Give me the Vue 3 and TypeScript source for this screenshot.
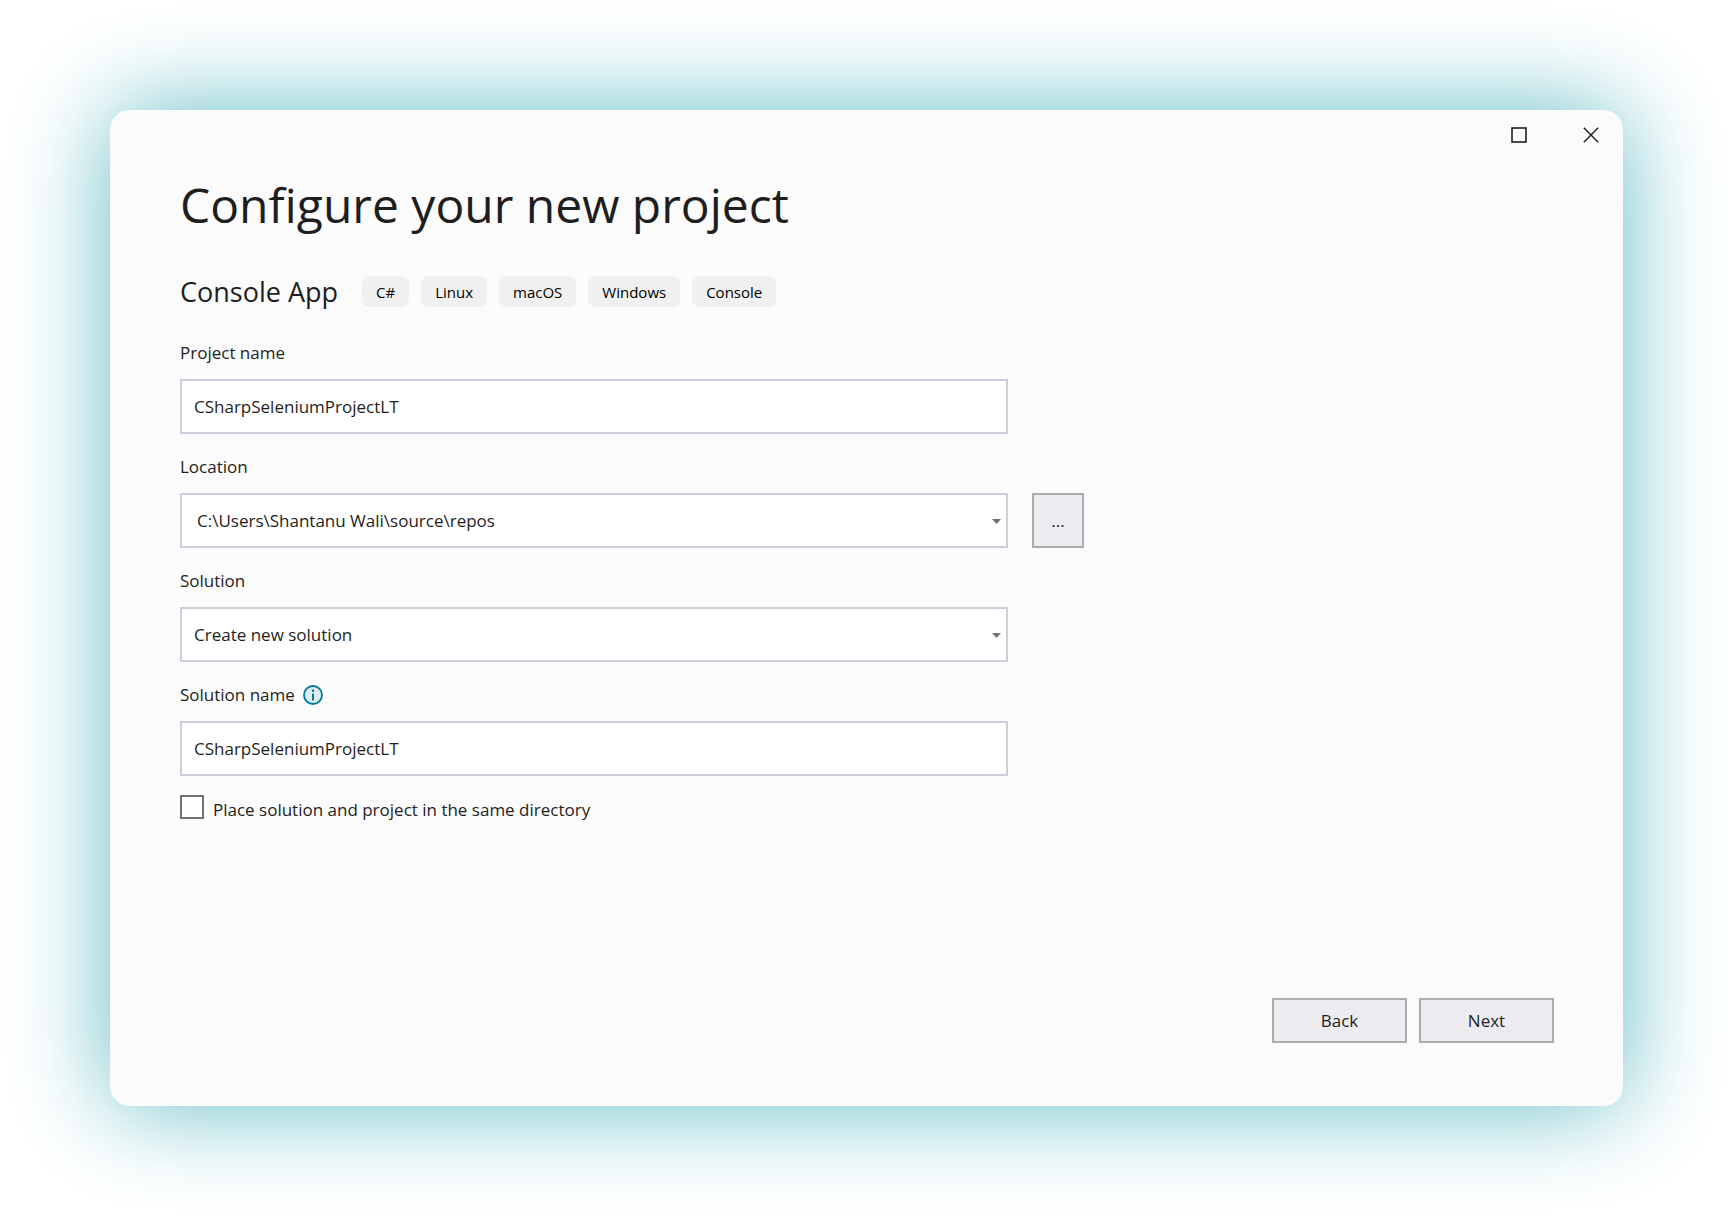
<script setup lang="ts">
import { ref } from 'vue'

const tags: string[] = ['C#', 'Linux', 'macOS', 'Windows', 'Console']
const projectName = ref<string>('CSharpSeleniumProjectLT')
const location = ref<string>('C:\\Users\\Shantanu Wali\\source\\repos')
const solution = ref<string>('Create new solution')
const solutionName = ref<string>('CSharpSeleniumProjectLT')
const sameDirectory = ref<boolean>(false)
</script>

<template>
  <div class="page">
    <main class="dialog">
      <header class="titlebar">
        <button type="button" class="window-button" aria-label="Maximize">
          <svg width="16" height="16" viewBox="0 0 16 16" fill="none" stroke="#1e1e1e" stroke-width="1.6">
            <rect x="1" y="1" width="14" height="14" />
          </svg>
        </button>
        <button type="button" class="window-button" aria-label="Close">
          <svg width="16" height="16" viewBox="0 0 16 16" fill="none" stroke="#1e1e1e" stroke-width="1.4">
            <path d="M0.8 0.8 15.2 15.2M15.2 0.8 0.8 15.2" />
          </svg>
        </button>
      </header>

      <h1 class="title">Configure your new project</h1>

      <section class="template">
        <h2 class="template-name">Console App</h2>
        <ul class="tags">
          <li v-for="tag in tags" :key="tag" class="tag">{{ tag }}</li>
        </ul>
      </section>

      <form id="project-form" class="form" @submit.prevent>
        <div class="field">
          <label class="label" for="project-name">Project name</label>
          <input id="project-name" v-model="projectName" class="control" type="text" spellcheck="false" />
        </div>

        <div class="field">
          <label class="label" for="location">Location</label>
          <div class="row">
            <div class="select-wrap">
              <select id="location" v-model="location" class="control path">
                <option>{{ location }}</option>
              </select>
              <svg class="arrow" width="9" height="5" viewBox="0 0 9 5" fill="#717171">
                <path d="M0 0H9L4.5 5Z" />
              </svg>
            </div>
            <button type="button" class="button browse" aria-label="Browse">...</button>
          </div>
        </div>

        <div class="field">
          <label class="label" for="solution">Solution</label>
          <div class="select-wrap">
            <select id="solution" v-model="solution" class="control">
              <option>Create new solution</option>
            </select>
            <svg class="arrow" width="9" height="5" viewBox="0 0 9 5" fill="#717171">
              <path d="M0 0H9L4.5 5Z" />
            </svg>
          </div>
        </div>

        <div class="field">
          <label class="label" for="solution-name">
            Solution name
            <svg width="20" height="20" viewBox="0 0 20 20">
              <circle cx="10" cy="10" r="9" fill="#e0ecf1" stroke="#0077a0" stroke-width="1.8" />
              <circle cx="10" cy="5.7" r="1.3" fill="#0077a0" />
              <path d="M10 8.4V15.4" stroke="#0077a0" stroke-width="1.9" />
            </svg>
          </label>
          <input id="solution-name" v-model="solutionName" class="control" type="text" spellcheck="false" />
        </div>

        <div class="check">
          <input id="same-directory" v-model="sameDirectory" class="checkbox" type="checkbox" />
          <label class="check-label" for="same-directory">Place solution and project in the same directory</label>
        </div>
      </form>

      <footer class="actions">
        <button type="button" class="button action">Back</button>
        <button type="submit" form="project-form" class="button action">Next</button>
      </footer>
    </main>
  </div>
</template>

<style>
body {
  margin: 0;
  background: #ffffff;
}
</style>

<style scoped>
.page {
  box-sizing: border-box;
  min-height: 100vh;
  padding: 110px;
  display: flex;
  font-family: "Segoe UI", "Open Sans", "Noto Sans", sans-serif;
  font-size: 17px;
  line-height: 24px;
  color: #1e1e1e;
}

.dialog {
  box-sizing: border-box;
  flex: 1;
  display: flex;
  flex-direction: column;
  padding: 0 69px 63px 70px;
  border-radius: 20px;
  background: #fbfbfb;
  box-shadow: 0 0 100px #61bbc5;
}

.titlebar {
  display: flex;
  justify-content: flex-end;
  gap: 24px;
  height: 50px;
  margin-right: -61px;
}

.window-button {
  display: grid;
  place-items: center;
  width: 48px;
  height: 50px;
  padding: 0;
  border: 0;
  background: transparent;
}

.title {
  margin: 9px 0 0;
  font-size: 48px;
  line-height: 72px;
  font-weight: 400;
}

.template {
  display: flex;
  align-items: flex-start;
  gap: 24px;
  margin-top: 31px;
}

.template-name {
  margin: 0;
  font-size: 27px;
  line-height: 40px;
  font-weight: 400;
}

.tags {
  display: flex;
  gap: 12px;
  margin: 4px 0 0;
  padding: 0;
  list-style: none;
}

.tag {
  padding: 4px 14px 3px;
  border-radius: 8px;
  background: #f0f0f0;
  color: #000000;
  font-size: 15px;
}

.form {
  display: flex;
  flex-direction: column;
  gap: 21px;
  margin-top: 29px;
}

.field {
  display: flex;
  flex-direction: column;
  gap: 14px;
  max-width: 904px;
}

.label {
  display: flex;
  align-items: center;
  gap: 8px;
}

.row {
  display: flex;
  gap: 24px;
}

.select-wrap {
  position: relative;
  flex: 1;
  max-width: 828px;
}

.control {
  box-sizing: border-box;
  display: block;
  width: 100%;
  max-width: 828px;
  height: 55px;
  padding: 0 12px;
  border: 2px solid #cccedb;
  border-radius: 0;
  background: #ffffff;
  color: inherit;
  font: inherit;
  appearance: none;
}

.path {
  padding-left: 15px;
}

.arrow {
  position: absolute;
  top: 26px;
  right: 7px;
  pointer-events: none;
}

.button {
  box-sizing: border-box;
  padding: 0;
  border: 2px solid #acacac;
  background: #ececf0;
  color: inherit;
  font: inherit;
}

.browse {
  width: 52px;
  height: 55px;
}

.check {
  display: flex;
  align-items: flex-start;
  gap: 9px;
  margin-top: -2px;
}

.check-label {
  padding-top: 3px;
}

.checkbox {
  box-sizing: border-box;
  width: 24px;
  height: 24px;
  margin: 0;
  border: 2px solid #717171;
  background: #ffffff;
  appearance: none;
}

.checkbox:checked {
  background: #717171;
}

.actions {
  display: flex;
  justify-content: flex-end;
  gap: 12px;
  margin-top: auto;
}

.action {
  width: 135px;
  height: 45px;
}
</style>
